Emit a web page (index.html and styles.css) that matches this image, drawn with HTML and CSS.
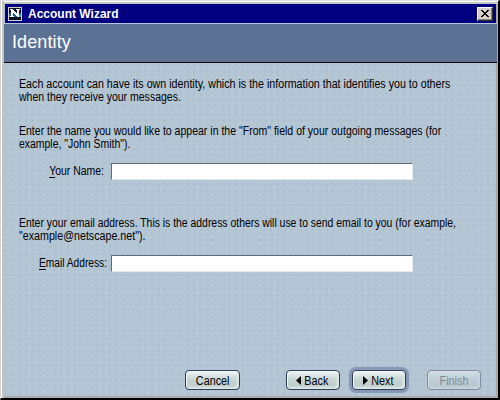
FILE: index.html
```html
<!DOCTYPE html>
<html lang="en">
<head>
<meta charset="utf-8">
<title>Account Wizard</title>
<link rel="stylesheet" href="styles.css">
</head>
<body>
<div class="window">
  <div class="titlebar">
    <svg class="logo" width="14" height="14" viewBox="0 0 14 14">
      <path fill="#d4d0c8" d="M0 0h14v14H0z"/><path fill="#08142e" d="M1 1h12v12H1z"/>
      <path fill="#16647b" d="M1 6h12v4H1z"/><path fill="#3eb1b4" d="M1 9h3v1H1zM10 8h3v2h-3z"/>
      <path fill="#080f20" d="M1 13v-2l3-1h6l3 2v1z"/>
      <path fill="#fff" d="M2 2h3v1h1v1h1v1h1v1h1V3H8V2h4v1h-1v7H9V9H8V8H7V7H6V6H5v3h1v1H2V9h1V3H2z"/>
    </svg>
    <span class="title">Account Wizard</span>
    <button class="close" aria-label="Close"><svg width="8" height="7" viewBox="0 0 8 7" shape-rendering="crispEdges"><path d="M0 0h2v1h1v1h2V1h1V0h2v1H7v1H6v1H5v1h1v1h1v1h1v1H6V6H5V5H3v1H2v1H0V6h1V5h1V4h1V3H2V2H1V1H0z"/></svg></button>
  </div>
  <header class="header"><h1>Identity</h1></header>
  <main class="content">
    <p><span class="l1">Each account can have its own identity, which is the information that identifies you to others</span><br><span class="l2">when they receive your messages.</span></p>
    <p class="intro"><span class="l3">Enter the name you would like to appear in the "From" field of your outgoing messages (for</span><br><span class="l4">example, "John Smith").</span></p>
    <div class="field"><label for="name"><span><u>Y</u>our Name:</span></label><input id="name" type="text"></div>
    <p class="email"><span class="l5">Enter your email address. This is the address others will use to send email to you (for example,</span><br><span class="l6">"example@netscape.net").</span></p>
    <div class="field mail"><label for="mail"><span><u>E</u>mail Address:</span></label><input id="mail" type="text"></div>
  </main>
  <footer class="actions">
    <button class="btn cancel"><span>Cancel</span></button>
    <button class="btn"><svg width="5" height="9" viewBox="0 0 5 9"><path d="M5 0v9L0 4.5z"/></svg><span>Back</span></button>
    <button class="btn next"><svg width="5" height="9" viewBox="0 0 5 9"><path d="M0 0v9l5-4.5z"/></svg><span>Next</span></button>
    <button class="btn finish" disabled><span>Finish</span></button>
  </footer>
</div>
</body>
</html>
```
FILE: styles.css
```css
* { box-sizing: border-box; }
body { margin: 0; font: 12px/13px "Liberation Sans", Arial, sans-serif; color: #000; }
.window {
  width: 500px; height: 400px; display: flex; flex-direction: column; overflow: hidden;
  padding: 2px 1px 1px 3px;
  border: solid; border-width: 1px 2px 2px 1px; border-color: #e0e0e0 #000 #000 #d4d4d4;
  background-color: #b5c6d4;
  background-image:
    radial-gradient(circle at 1px 1px, #abbccd 0.6px, transparent 1px),
    radial-gradient(circle at 4px 4px, #acbdce 0.6px, transparent 1px);
  background-size: 6px 7px, 7px 5px;
  box-shadow: inset 1px 0 #fff, inset 3px 0 #c5c3be, inset 0 1px #fff, inset 0 3px #c5c5c5, inset -2px -2px #aaa9a8;
}
.titlebar { height: 19px; flex: none; display: flex; align-items: center; padding: 0 3px 0 3px; background: #000080; margin: 1px 1px 0 1px; }
.logo { flex: none; }
.title { margin-left: 6px; color: #fff; font-weight: bold; line-height: 14px; white-space: nowrap; }
.close { margin-left: auto; width: 16px; height: 14px; padding: 0 0 1px; display: grid; place-items: center; background: #d4d0c8; border: 1px solid; border-color: #fff #303030 #303030 #fff; box-shadow: inset -1px -1px #808080; }
.header { height: 40px; flex: none; border-top: 1px solid #b7c5d6; border-bottom: 1px solid #000; background: #5b7294; padding: 8px 0 0 8px; }
.header h1 { margin: 0; color: #fff; font: 18px/20px "Liberation Sans", Arial, sans-serif; letter-spacing: .1px; }
.content { flex: none; padding: 15px 0 0 15px; }
p { margin: 0; height: 26px; white-space: nowrap; }
p span { display: inline-block; vertical-align: top; transform-origin: 0 50%; }
.l1 { transform: scaleX(.89); }
.l2 { transform: scaleX(.876); }
.l3 { transform: scaleX(.877); }
.l4 { transform: scaleX(.87); }
.l5 { transform: scaleX(.867); }
.l6 { transform: scaleX(.89); }
.intro { margin-top: 21px; }
.email { margin-top: 37px; }
.field { display: flex; align-items: center; margin-top: 11px; height: 18px; }
.field label { width: 92px; padding-right: 7px; display: flex; justify-content: flex-end; white-space: nowrap; }
.field label span { transform: scaleX(.87); transform-origin: 100% 50%; }
.mail label { padding-right: 4px; }
.mail label span { transform: scaleX(.85); }
.field u { text-underline-offset: 2px; }
.field input { width: 302px; height: 17px; padding: 0; outline: 0; background: #fff; border: 1px solid; border-color: #5d6b7b #e2eaed #e2eaed #5d6b7b; border-radius: 0; }
.actions { display: flex; align-items: center; margin-top: auto; padding: 0 17px 7px 181px; height: 27px; flex: none; }
.btn { display: flex; align-items: center; justify-content: center; gap: 2px; flex: none; width: 54px; height: 20px; padding: 1px 0 0; color: #000; font: 12px/14px "Liberation Sans", Arial, sans-serif; border: 1px solid #303b59; border-radius: 4px; background: linear-gradient(#f0f5f4, #c5d3d3 50%, #bbcccb); box-shadow: inset 1px 1px #f5f8f8, inset -2px -2px 2px #dfe9e6; }
.btn span { transform: scaleX(.9); }
.cancel { width: 55px; margin-right: 46px; }
.next { margin: 0 21px 0 12px; box-shadow: 0 0 0 3px #8797b6, inset 1px 1px #f5f8f8, inset -2px -2px 2px #dfe9e6; }
.finish { color: #7d8c9c; border-color: #7f8da5; background: linear-gradient(#d3dfe5, #bdccd5 50%, #b6c6cf); box-shadow: inset 1px 1px #d3dfe5, inset -2px -2px 2px #c7d5db; }
```
